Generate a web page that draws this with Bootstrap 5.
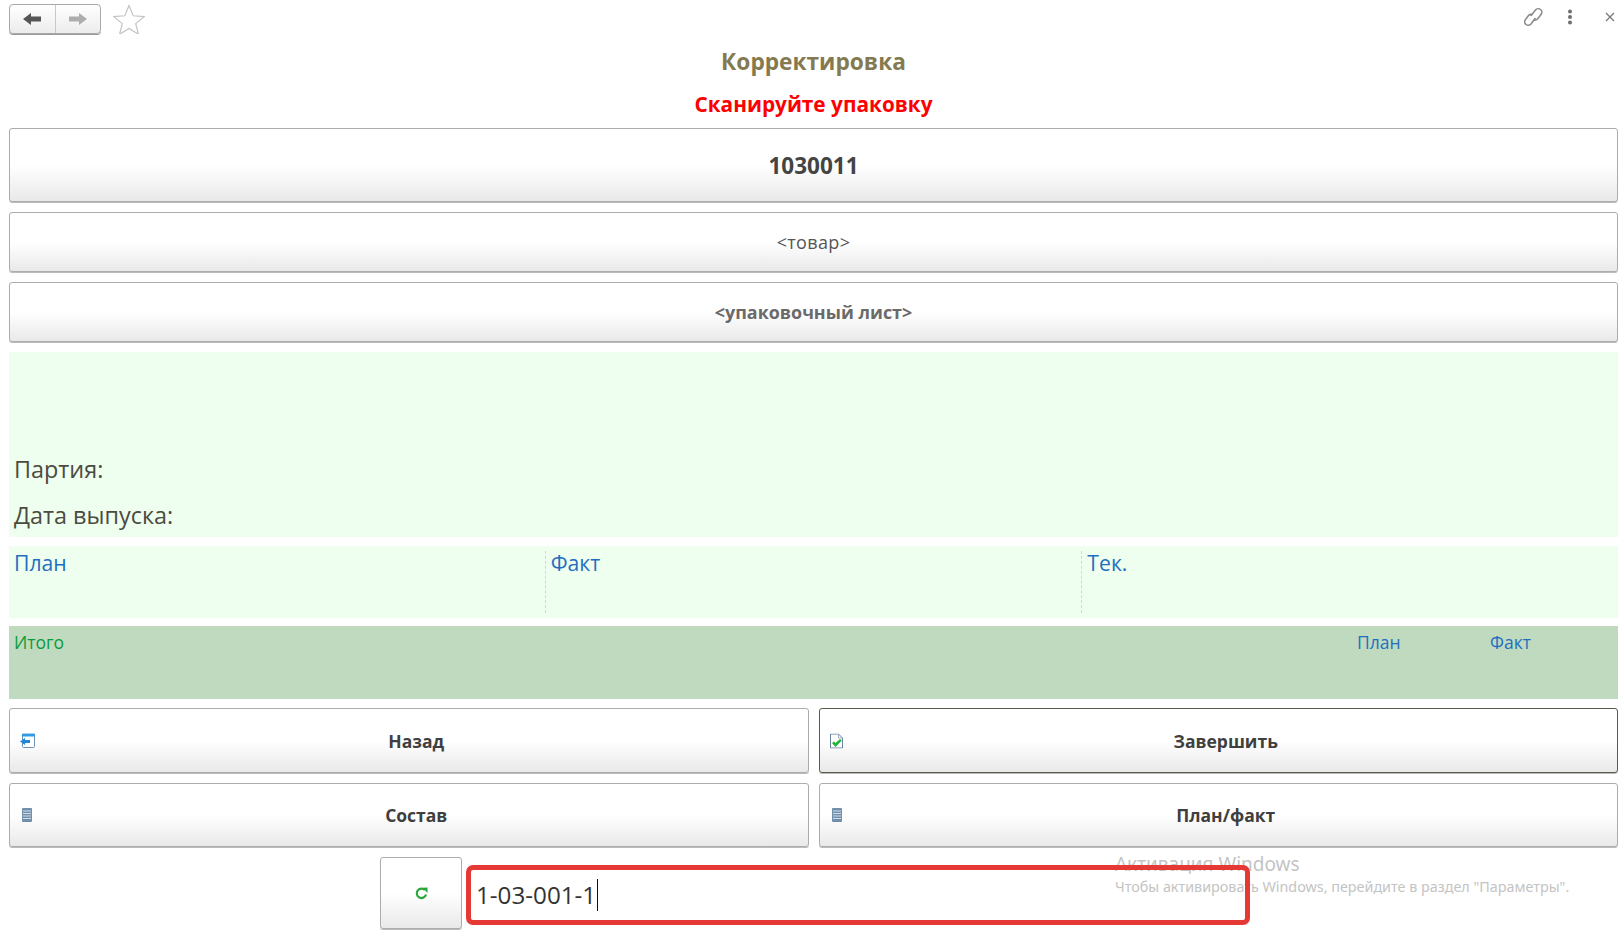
<!DOCTYPE html>
<html lang="ru">
<head>
<meta charset="utf-8">
<title>Корректировка</title>
<link href="https://cdn.jsdelivr.net/npm/bootstrap@5.3.0/dist/css/bootstrap.min.css" rel="stylesheet">
<style>
html,body{height:100%;}
body{font-family:"Open Sans","Noto Sans",sans-serif;background:#fff;color:#4b4b4b;overflow:hidden;position:relative;}
.page{width:1620px;height:932px;padding:0 2px 0 9px;}
.topbar{height:38px;padding-top:4px;}
.navgroup{width:92px;height:30px;border:1px solid #a9a9a9;border-radius:4px;background:linear-gradient(#fff,#ececec);box-shadow:0 1px 0 #999;}
.navcell{flex:1;}
.navcell+.navcell{border-left:1px solid #c8c8c8;}
.staricon{margin-left:12px;}
.topicons{margin-right:3px;padding-top:2px;}
.iconkebab{margin-left:23px;}
.iconclose{margin-left:32px;}
.heading{height:46px;font-size:22.7px;font-weight:700;color:#847a4f;line-height:48px;}
.prompt{height:44px;line-height:40px;font-size:20.800px;font-weight:700;color:#fe0000;}
.gbtn{border:1px solid #acacac;border-radius:3px;background:linear-gradient(#fff 50%,#e9e9e9);color:#3f3f3f;font-weight:700;position:relative;box-shadow:0 1px 0 #bbb;}
.gbtn-a{height:74px;font-size:22.500px;margin-bottom:10px;color:#444;padding-top:2px;}
.gbtn-b{height:60px;font-size:18px;font-weight:400;color:#555;margin-bottom:10px;letter-spacing:.35px;}
.gbtn-c{height:60px;font-size:17.900px;color:#6a6a6a;margin-bottom:10px;}
.infobox{height:185px;background:#efffef;padding:0 5px;margin-bottom:9px;font-size:23.400px;line-height:46px;color:#4b4b3f;}
.infolast{margin-bottom:-1px;}
.planbox{height:72px;background:#efffef;margin-bottom:8px;padding:5px 0;}
.plancol{flex:1 1 0;padding-left:5px;font-size:21.200px;line-height:24px;color:#1f6fc0;border-left:1px dashed #d5d5d5;}
.plancol:first-child{border-left:0;}
.totalbox{height:73px;background:#c0dabf;margin-bottom:9px;padding:3px 40px 3px 5px;font-size:17.500px;line-height:26px;}
.totlabel{color:#0a9b3c;}
.totval{color:#1f6fc0;}
.totplan{width:133px;}
.totfact{width:88px;}
.btnrow{gap:10px;margin-bottom:10px;}
.cmdbtn{flex:1 1 0;height:65px;font-size:17.500px;padding:1px 0 0 15px;}
.cmdbtn2{height:64px;padding-top:0;}
.cmdbtn-focus{border-color:#5b5b45;}
.btnicon{position:absolute;left:10px;top:50%;transform:translateY(-50%);}
.btnicon-list{left:12px;}
.bottomrow{height:72px;padding-left:371px;gap:4px;}
.refbtn{width:82px;height:72px;}
.scaninput{width:784px;height:60px;margin-top:8px;border:5px solid #e53935;border-radius:7px;padding-left:5px;font-size:24.200px;line-height:50px;color:#333;position:relative;z-index:2;}
.caret{display:inline-block;width:1px;height:32px;background:#111;vertical-align:-7px;margin-left:1px;}
.watermark{position:absolute;left:1115px;top:852px;color:#c4c4c4;font-family:"Noto Sans","Open Sans",sans-serif;pointer-events:none;}
.wm1{font-size:19px;line-height:25px;}
.wm2{font-size:14.350px;line-height:20px;white-space:nowrap;}
</style>
</head>
<body>
<div class="page">
  <div class="topbar d-flex align-items-start">
    <div class="navgroup d-flex">
      <div class="navcell d-flex align-items-center justify-content-center">
        <svg width="18" height="14" viewBox="0 0 18 14"><path d="M0 7 8 1v3.500h10v5H8V13z" fill="#555"/></svg>
      </div>
      <div class="navcell d-flex align-items-center justify-content-center">
        <svg width="18" height="14" viewBox="0 0 18 14"><path d="M18 7 10 1v3.500H0v5h10V13z" fill="#adadad"/></svg>
      </div>
    </div>
    <svg class="staricon" width="32" height="30" viewBox="0 0 32 30"><path d="M16 1.500l4.200 10.300 11 .8-8.500 7 2.800 10.700L16 24.400 6.500 30.300l2.800-10.700-8.500-7 11-.8z" fill="#fff" stroke="#c4c4c4" stroke-width="1.200"/></svg>
    <div class="topicons ms-auto d-flex align-items-center">
      <svg width="22" height="22" viewBox="0 0 22 22" fill="none" stroke="#8b8b8b" stroke-width="1.600" stroke-linecap="round"><path d="M9 9.500l4.500-5.500a3.500 3.500 0 0 1 5.500 4.500l-3.500 4.500a3.500 3.500 0 0 1-3.500 1"/><path d="M13 12.500l-4 5.500a3.500 3.500 0 0 1-5.500-4.500l3-4a3.500 3.500 0 0 1 3.500-1"/></svg>
      <svg class="iconkebab" width="6" height="16" viewBox="0 0 6 16" fill="#6f6f6f"><circle cx="3" cy="2.500" r="2"/><circle cx="3" cy="8" r="2"/><circle cx="3" cy="13.500" r="2"/></svg>
      <svg class="iconclose" width="10" height="10" viewBox="0 0 10 10" stroke="#7a7a7a" stroke-width="1.300"><path d="M1 1l8 8M9 1l-8 8"/></svg>
    </div>
  </div>
  <div class="heading text-center">Корректировка</div>
  <div class="prompt text-center">Сканируйте упаковку</div>
  <div class="gbtn gbtn-a d-flex align-items-center justify-content-center">1030011</div>
  <div class="gbtn gbtn-b d-flex align-items-center justify-content-center">&lt;товар&gt;</div>
  <div class="gbtn gbtn-c d-flex align-items-center justify-content-center">&lt;упаковочный лист&gt;</div>
  <div class="infobox d-flex flex-column justify-content-end">
    <div>Партия:</div>
    <div class="infolast">Дата выпуска:</div>
  </div>
  <div class="planbox d-flex">
    <div class="plancol">План</div>
    <div class="plancol">Факт</div>
    <div class="plancol">Тек.</div>
  </div>
  <div class="totalbox d-flex">
    <div class="totlabel flex-grow-1">Итого</div>
    <div class="totval totplan">План</div>
    <div class="totval totfact">Факт</div>
  </div>
  <div class="btnrow d-flex">
    <div class="gbtn cmdbtn d-flex align-items-center justify-content-center">
      <svg class="btnicon" width="15" height="15" viewBox="0 0 15 15"><rect x="2.500" y=".5" width="12" height="13.500" rx="1" fill="#fff" stroke="#6f93b5"/><rect x="2" y="0" width="13" height="3" fill="#2f9be8"/><path d="M0 8l5-3.500V6.500h5v3H5v2z" fill="#1f86d8"/></svg>
      Назад
    </div>
    <div class="gbtn cmdbtn cmdbtn-focus d-flex align-items-center justify-content-center">
      <svg class="btnicon" width="13" height="15" viewBox="0 0 13 15"><path d="M.5.5h8l4 4v10H.5z" fill="#fff" stroke="#6b83a3"/><path d="M8.500.5v4h4" fill="none" stroke="#9fb0c6"/><path d="M2 9.500l2-1.500 1.500 1.500L10 5.500l1.800 1.500L5.500 13.500z" fill="#1eb53a"/></svg>
      Завершить
    </div>
  </div>
  <div class="btnrow d-flex">
    <div class="gbtn cmdbtn cmdbtn2 d-flex align-items-center justify-content-center">
      <svg class="btnicon btnicon-list" width="10" height="14" viewBox="0 0 10 14"><rect width="10" height="14" rx="1" fill="#6f8fad"/><path d="M1 3h8M1 5.500h8M1 8h8M1 10.500h8" stroke="#d3dee9"/></svg>
      Состав
    </div>
    <div class="gbtn cmdbtn cmdbtn2 d-flex align-items-center justify-content-center">
      <svg class="btnicon btnicon-list" width="10" height="14" viewBox="0 0 10 14"><rect width="10" height="14" rx="1" fill="#6f8fad"/><path d="M1 3h8M1 5.500h8M1 8h8M1 10.500h8" stroke="#d3dee9"/></svg>
      План/факт
    </div>
  </div>
  <div class="bottomrow d-flex">
    <div class="gbtn refbtn d-flex align-items-center justify-content-center">
      <svg width="13" height="13" viewBox="0 0 13 13" fill="none"><path d="M11 7.500A4.700 4.700 0 1 1 9.800 3" stroke="#2aa53a" stroke-width="2.200"/><path d="M7.500 .8L12.500 .5V6z" fill="#2aa53a"/></svg>
    </div>
    <div class="scaninput">1-03-001-1<span class="caret"></span></div>
  </div>
</div>
<div class="watermark">
  <div class="wm1">Активация Windows</div>
  <div class="wm2">Чтобы активировать Windows, перейдите в раздел "Параметры".</div>
</div>
<script src="https://cdn.jsdelivr.net/npm/bootstrap@5.3.0/dist/js/bootstrap.bundle.min.js"></script>
</body>
</html>
